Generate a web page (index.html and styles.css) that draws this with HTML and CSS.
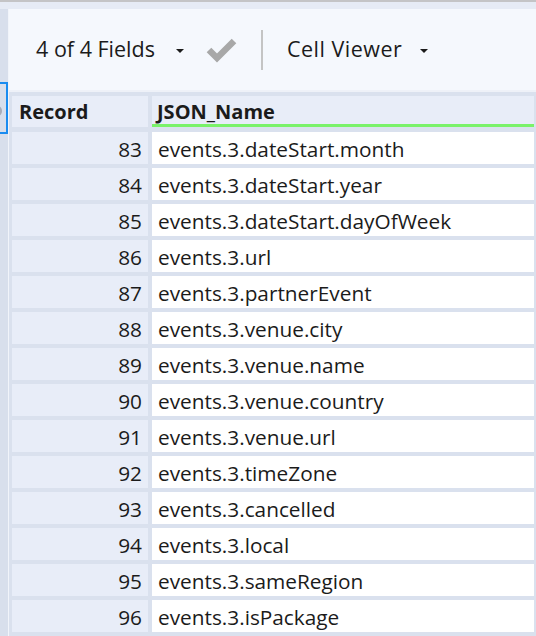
FILE: index.html
```html
<!DOCTYPE html>
<html>
<head>
<meta charset="utf-8">
<link rel="stylesheet" href="styles.css">
</head>
<body>
<div class="topline"></div>
<div class="main">
  <div class="leftstrip">
    <div class="focusbox"><span class="knob"></span></div>
  </div>
  <div class="content">
    <div class="toolbar">
      <span class="tb-label">4 of 4 Fields</span>
      <span class="caret caret-1"></span>
      <svg class="check" width="32" height="28" viewBox="0 0 32 28"><polyline points="3,14 11,22 28,5" fill="none" stroke="#a8a8a8" stroke-width="6.5" stroke-linejoin="miter"/></svg>
      <span class="sep"></span>
      <span class="tb-label tb-wide">Cell Viewer</span>
      <span class="caret caret-2"></span>
    </div>
    <div class="underline"></div>
    <div class="grid">
      <div class="hcell">Record</div>
      <div class="hcell hname">JSON_Name</div>
      <div class="num">83</div><div class="val">events.3.dateStart.month</div>
      <div class="num">84</div><div class="val">events.3.dateStart.year</div>
      <div class="num">85</div><div class="val">events.3.dateStart.dayOfWeek</div>
      <div class="num">86</div><div class="val">events.3.url</div>
      <div class="num">87</div><div class="val">events.3.partnerEvent</div>
      <div class="num">88</div><div class="val">events.3.venue.city</div>
      <div class="num">89</div><div class="val">events.3.venue.name</div>
      <div class="num">90</div><div class="val">events.3.venue.country</div>
      <div class="num">91</div><div class="val">events.3.venue.url</div>
      <div class="num">92</div><div class="val">events.3.timeZone</div>
      <div class="num">93</div><div class="val">events.3.cancelled</div>
      <div class="num">94</div><div class="val">events.3.local</div>
      <div class="num">95</div><div class="val">events.3.sameRegion</div>
      <div class="num">96</div><div class="val">events.3.isPackage</div>
    </div>
  </div>
</div>
</body>
</html>
```
FILE: styles.css
```css
html, body {
  margin: 0;
  padding: 0;
}
body {
  width: 536px;
  height: 636px;
  overflow: hidden;
  background: #e6ebf5;
  font-family: "Open Sans", "Noto Sans", sans-serif;
  color: #1b1b1b;
}
.topline {
  height: 2px;
  background: #c4c4c6;
}
.main {
  display: flex;
  padding-top: 7px;
}
.leftstrip {
  width: 8px;
  flex: none;
  background: #d8dfec;
  position: relative;
  height: 627px;
}
.focusbox {
  position: absolute;
  left: -4px;
  top: 73px;
  width: 8px;
  height: 48px;
  border: 2px solid #1a8cf0;
  overflow: hidden;
}
.knob {
  position: absolute;
  left: -4px;
  top: 22px;
  width: 8px;
  height: 10px;
  border-radius: 50%;
  background: #a8adb8;
}
.content {
  flex: 1;
  border-left: 1px solid #f1f4fa;
  display: flex;
  flex-direction: column;
}
.toolbar {
  height: 81px;
  background: #f5f8fd;
  display: flex;
  align-items: center;
  padding-left: 27px;
}
.tb-label {
  font-size: 21.5px;
  line-height: 26px;
  margin-top: -1px;
}
.tb-wide {
  letter-spacing: 0.5px;
}
.caret {
  width: 0;
  height: 0;
  border-left: 4px solid transparent;
  border-right: 4px solid transparent;
  border-top: 4px solid #1b1b1b;
  margin-top: 2px;
}
.caret-1 {
  margin-left: 21px;
}
.check {
  margin-left: 22px;
  margin-top: 1px;
}
.sep {
  width: 2px;
  height: 40px;
  background: #c4c4c4;
  margin-left: 23px;
  margin-right: 24px;
}
.caret-2 {
  margin-left: 18px;
}
.underline {
  height: 2px;
  background: #eef1f8;
}
.grid {
  flex: 1;
  background: #dae1ee;
  display: grid;
  grid-template-columns: 136px 382px;
  grid-auto-rows: 32px;
  column-gap: 4px;
  row-gap: 4px;
  padding: 4px 2px 0 3px;
  align-content: start;
  font-size: 20.8px;
}
.hcell {
  background: #e8edf8;
  font-weight: 700;
  font-size: 20px;
  padding-left: 7px;
  display: flex;
  align-items: center;
  height: 31px;
}
.hname {
  padding-left: 5px;
  box-shadow: inset 0 -3px 0 #7af26a;
}
.num {
  background: #e8edf8;
  text-align: right;
  padding-right: 6px;
  line-height: 34px;
}
.val {
  background: #ffffff;
  padding-left: 6px;
  line-height: 34px;
  white-space: nowrap;
  overflow: hidden;
}
```
